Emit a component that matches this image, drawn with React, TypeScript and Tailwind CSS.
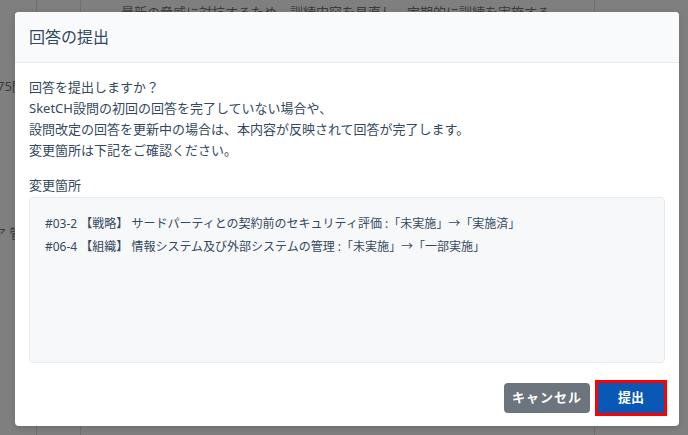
import * as React from "react";

const font = "font-['Noto_Sans','Noto_Sans_CJK_JP',sans-serif]";

const changes = [
  "#03-2 【戦略】 サードパーティとの契約前のセキュリティ評価 :「未実施」→「実施済」",
  "#06-4 【組織】 情報システム及び外部システムの管理 :「未実施」→「一部実施」",
];

function BackgroundPage() {
  return (
    <div className="grid h-[435px] grid-cols-[37px_44px_514px_1fr] overflow-hidden bg-[#7f7f7f] text-[13px] text-[#3c3c3c]">
      <div className="relative overflow-hidden border-r border-[#6f6f6f]">
        <div className="ml-[-3px] mt-[76px] leading-[20px] whitespace-nowrap">75問</div>
        <div className="ml-[-7px] mt-[127px] leading-[20px] whitespace-nowrap">ア 管</div>
      </div>
      <div className="border-r border-[#6f6f6f]" />
      <div className="border-r border-[#6f6f6f] pl-[40px]">
        <div className="mt-[2px] leading-[20px] whitespace-nowrap">
          最新の脅威に対抗するため、訓練内容を見直し、定期的に訓練を実施する
        </div>
      </div>
      <div />
    </div>
  );
}

function SubmitDialog() {
  return (
    <div className="absolute left-[15px] top-[12px] w-[664px] overflow-hidden rounded-[4px] bg-white shadow-[0_2px_6px_rgba(0,0,0,0.15)]">
      <div className="flex h-[51px] items-center border-b border-[#e4e9ef] bg-[#f8fafc] px-[14px]">
        <h2 className="text-[16px] leading-[22px] text-[#34495e]">回答の提出</h2>
      </div>
      <div className="px-[14px] pt-[14px] text-[13px] text-[#34495e]">
        <div className="leading-[21px]">
          <p>回答を提出しますか？</p>
          <p>SketCH設問の初回の回答を完了していない場合や、</p>
          <p>設問改定の回答を更新中の場合は、本内容が反映されて回答が完了します。</p>
          <p>変更箇所は下記をご確認ください。</p>
        </div>
        <p className="mt-[14px] leading-[21px]">変更箇所</p>
        <div className="mt-[1px] h-[166px] rounded-[4px] border border-[#e6e9ee] bg-[#f7f8fa] px-[15px] pt-[14px] text-[12px] leading-[23px]">
          {changes.map((c) => (
            <p key={c} className="whitespace-nowrap">
              {c}
            </p>
          ))}
        </div>
      </div>
      <div className="flex justify-end gap-[8px] px-[15px] pb-[13px] pt-[20px]">
        <button className="h-[30px] w-[86px] rounded-[4px] bg-[#6c757d] text-[13px] font-bold tracking-[1px] text-white">
          キャンセル
        </button>
        <button className="h-[30px] w-[66px] bg-[#0a58b5] text-[13px] font-bold text-white outline-[3px] outline-[#ff0000] outline-solid">
          提出
        </button>
      </div>
    </div>
  );
}

export default function App() {
  return (
    <div className={`relative h-[435px] w-[688px] overflow-hidden ${font}`}>
      <BackgroundPage />
      <SubmitDialog />
    </div>
  );
}
